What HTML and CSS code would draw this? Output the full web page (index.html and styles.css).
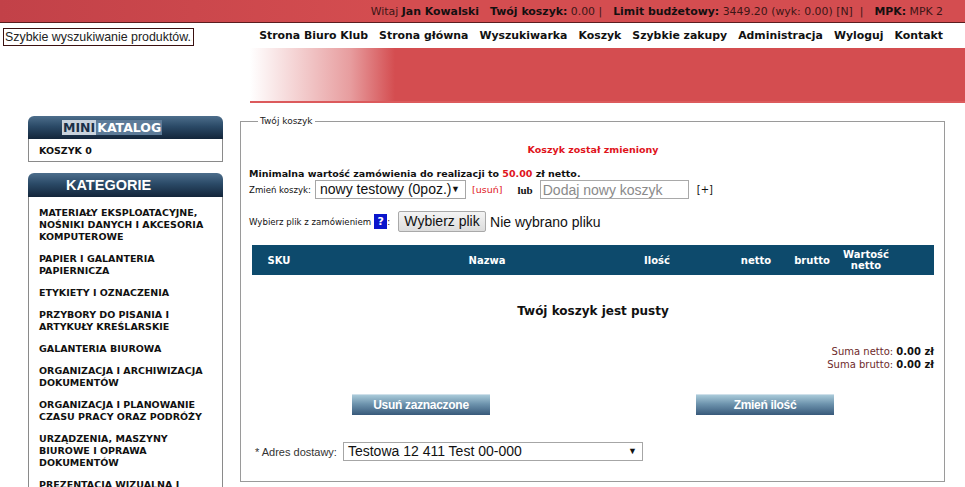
FILE: index.html
```html
<!DOCTYPE html>
<html lang="pl">
<head>
    <meta charset="UTF-8">
    <title>Twój koszyk</title>
    <link rel="stylesheet" href="styles.css">
</head>
<body>
    <div class="topbar">
        <span>Witaj <b>Jan Kowalski</b></span>
        <span><b>Twój koszyk:</b> 0.00 |</span>
        <span><b>Limit budżetowy:</b> 3449.20 (wyk: 0.00) [N] &nbsp;|</span>
        <span><b>MPK:</b> MPK 2</span>
    </div>

    <div class="navrow">
        <input class="quick-search" type="text" value="Szybkie wyszukiwanie produktów...">
        <nav class="menu">
            <a href="#">Strona Biuro Klub</a>
            <a href="#">Strona główna</a>
            <a href="#">Wyszukiwarka</a>
            <a href="#">Koszyk</a>
            <a href="#">Szybkie zakupy</a>
            <a href="#">Administracja</a>
            <a href="#">Wyloguj</a>
            <a href="#">Kontakt</a>
        </nav>
    </div>

    <div class="banner"></div>

    <div class="page">
        <aside class="sidebar">
            <div class="side-head mini"><span class="mini-a">MINI</span><span class="mini-b">KATALOG</span></div>
            <div class="side-box">KOSZYK 0</div>

            <div class="side-head cat">KATEGORIE</div>
            <ul class="cat-list">
                <li>MATERIAŁY EKSPLOATACYJNE, NOŚNIKI DANYCH I AKCESORIA KOMPUTEROWE</li>
                <li>PAPIER I GALANTERIA PAPIERNICZA</li>
                <li>ETYKIETY I OZNACZENIA</li>
                <li>PRZYBORY DO PISANIA I ARTYKUŁY KREŚLARSKIE</li>
                <li>GALANTERIA BIUROWA</li>
                <li>ORGANIZACJA I ARCHIWIZACJA DOKUMENTÓW</li>
                <li>ORGANIZACJA I PLANOWANIE CZASU PRACY ORAZ PODRÓŻY</li>
                <li>URZĄDZENIA, MASZYNY BIUROWE I OPRAWA DOKUMENTÓW</li>
                <li>PREZENTACJA WIZUALNA I TABLICE</li>
            </ul>
        </aside>

        <fieldset class="cart">
            <legend>Twój koszyk</legend>

            <p class="notice">Koszyk został zmieniony</p>

            <p class="min-value">Minimalna wartość zamówienia do realizacji to <span class="red">50.00</span> zł netto.</p>
            <div class="row change-row">
                <span class="small">Zmień koszyk:</span>
                <div class="select sel-cart">nowy testowy (0poz.)<span class="arrow">▼</span></div>
                <a class="remove" href="#">[usuń]</a>
                <b class="lub">lub</b>
                <input class="new-cart" type="text" placeholder="Dodaj nowy koszyk">
                <span class="plus">[+]</span>
            </div>

            <div class="row file-row">
                <span class="small">Wybierz plik z zamówieniem</span>
                <span class="help">?</span><span class="small">:</span>
                <span class="file-btn">Wybierz plik</span>
                <span class="file-none">Nie wybrano pliku</span>
            </div>

            <div class="cart-head">
                <span>SKU</span>
                <span class="c-name">Nazwa</span>
                <span>Ilość</span>
                <span></span>
                <span>netto</span>
                <span>brutto</span>
                <span>Wartość netto</span>
            </div>

            <p class="empty">Twój koszyk jest pusty</p>

            <div class="sums">
                <div>Suma netto: <b>0.00 zł</b></div>
                <div>Suma brutto: <b>0.00 zł</b></div>
            </div>

            <div class="actions">
                <button class="blue-btn">Usuń zaznaczone</button>
                <button class="blue-btn">Zmień ilość</button>
            </div>

            <div class="row address-row">
                <span class="addr-label">* Adres dostawy:</span>
                <div class="select sel-address">Testowa 12 411 Test 00-000<span class="arrow">▼</span></div>
            </div>
        </fieldset>
    </div>
</body>
</html>
```

FILE: styles.css
```css
:root {
    --red: #d44d50;
    --navy: #0d4a6c;
    --text: #111;
}

* {
    box-sizing: border-box;
    margin: 0;
    padding: 0;
}

body {
    font-family: 'DejaVu Sans', Verdana, sans-serif;
    color: var(--text);
    background: #fff;
    overflow: hidden;
}

/* pasek gorny */
.topbar {
    height: 23px;
    background: linear-gradient(to right, #c24148, #d44d50 40%);
    border-bottom: 1px solid #5a1d1f;
    display: flex;
    justify-content: flex-end;
    align-items: center;
    gap: 11px;
    padding-right: 22px;
    font-size: 10.9px;
    color: #3d1616;
    white-space: nowrap;
}

.topbar b {
    color: #141010;
}

.navrow {
    height: 25px;
    display: flex;
    align-items: center;
    justify-content: space-between;
    padding: 0 22px 0 3px;
}

.quick-search {
    flex-shrink: 0;
    width: 191px;
    height: 18px;
    border: 1px solid #3a1010;
    font-family: 'Liberation Sans', Arial, sans-serif;
    font-size: 12.4px;
    padding: 0 1px;
    color: #222;
    margin-top: 2px;
}

.menu {
    display: flex;
    gap: 11px;
    white-space: nowrap;
}

.menu a {
    color: #111;
    text-decoration: none;
    font-weight: bold;
    font-size: 10.9px;
}

.banner {
    height: 55px;
    margin-left: 250px;
    background: linear-gradient(to right, rgba(212, 77, 80, 0) 0, rgba(212, 77, 80, 0.55) 100px, var(--red) 145px);
    border-bottom: 2px solid #dc5a5c;
}

/* uklad */
.page {
    display: flex;
    align-items: flex-start;
    padding: 13px 0 0 28px;
    gap: 17px;
}

.sidebar {
    width: 195px;
    flex-shrink: 0;
}

.side-head {
    height: 24px;
    border-radius: 6px 6px 0 0;
    background: linear-gradient(#4d6e8c, #2b4a67 45%, #13253a);
    display: flex;
    align-items: center;
}

.side-head.mini {
    height: 23px;
    padding-left: 34px;
    font-weight: bold;
    font-size: 12.5px;
}

.mini-a {
    background: #c9d3dd;
    color: #1b3048;
    padding: 0 1px;
}

.mini-b {
    background: #5d7b98;
    color: #fff;
    padding: 0 1px;
}

.side-box {
    border: 1px solid #8a8a8a;
    border-top: none;
    height: 23px;
    font-size: 9.5px;
    font-weight: bold;
    padding: 6px 0 0 10px;
    margin-bottom: 11px;
}

.side-head.cat {
    padding-left: 38px;
    font-family: 'Liberation Sans', Arial, sans-serif;
    font-weight: bold;
    font-size: 14.5px;
    color: #fff;
}

.cat-list {
    list-style: none;
    border: 1px solid #8a8a8a;
    border-top: none;
    padding: 10px 8px 0 10px;
}

.cat-list li {
    font-size: 9.5px;
    font-weight: bold;
    line-height: 12px;
    margin-bottom: 10px;
}

/* koszyk */
.cart {
    width: 705px;
    height: 366px;
    border: 1px solid #9a9a9a;
    padding: 10px 10px 0 11px;
}

.cart legend {
    font-size: 9px;
    margin-left: 6px;
    padding: 0 2px;
    color: #222;
}

.notice {
    text-align: center;
    color: #e0141c;
    font-size: 9.5px;
    font-weight: bold;
    margin-top: 8px;
    height: 24px;
}

.min-value {
    font-size: 9.5px;
    font-weight: bold;
    margin-left: -3px;
}

.red {
    color: #e0141c;
}

.row {
    display: flex;
    align-items: center;
}

.small {
    font-size: 8.6px;
}

.change-row {
    margin-left: -3px;
    margin-top: 1px;
    gap: 4px;
}

.select {
    position: relative;
    height: 19px;
    border: 1px solid #a6a6a6;
    font-family: 'Liberation Sans', Arial, sans-serif;
    font-size: 14px;
    line-height: 17px;
    padding-left: 4px;
    background: #fff;
}

.select .arrow {
    position: absolute;
    right: 5px;
    top: 0;
    font-size: 9px;
}

.sel-cart {
    width: 151px;
}

.remove {
    color: #e0141c;
    font-size: 9.5px;
    text-decoration: none;
    margin: 0 11px 0 2px;
}

.lub {
    font-family: 'Liberation Serif', serif;
    font-size: 11px;
    margin-right: 3px;
}

.new-cart {
    width: 149px;
    height: 19px;
    border: 1px solid #a9a9a9;
    font-family: 'Liberation Sans', Arial, sans-serif;
    font-size: 14px;
    padding-left: 2px;
}

.new-cart::placeholder {
    color: #8a8a8a;
}

.plus {
    font-size: 10px;
    margin-left: 4px;
}

.file-row {
    margin: 12px 0 0 -3px;
    gap: 0;
}

.help {
    display: inline-block;
    width: 13px;
    height: 15px;
    background: #0a16cc;
    color: #fff;
    font-weight: bold;
    font-size: 11px;
    text-align: center;
    line-height: 15px;
    margin-left: 3px;
}

.file-btn {
    margin-left: 8px;
    height: 21px;
    width: 88px;
    border: 1px solid #a9a9a9;
    border-radius: 2px;
    background: linear-gradient(#f4f4f4, #dcdcdc);
    font-family: 'Liberation Sans', Arial, sans-serif;
    font-size: 14px;
    text-align: center;
    line-height: 19px;
}

.file-none {
    font-family: 'Liberation Sans', Arial, sans-serif;
    font-size: 14px;
    margin-left: 4px;
}

.cart-head {
    margin-top: 13px;
    height: 30px;
    background: var(--navy);
    display: grid;
    grid-template-columns: 54px 312px 78px 32px 56px 56px 52px 1fr;
    align-items: center;
    color: #fff;
    font-size: 10px;
    font-weight: bold;
    text-align: center;
    line-height: 11px;
}

.cart-head .c-name {
    padding-left: 50px;
}

.empty {
    text-align: center;
    font-weight: bold;
    font-size: 12px;
    margin-top: 29px;
    height: 41px;
}

.sums {
    text-align: right;
    font-size: 10px;
    color: #6e2a2a;
    line-height: 13px;
}

.sums b {
    color: #111;
}

.actions {
    display: flex;
    justify-content: center;
    gap: 206px;
    margin-top: 23px;
}

.blue-btn {
    width: 138px;
    height: 21px;
    border: none;
    border-top: 1px solid #cfe0ea;
    background: linear-gradient(#a9cad9, #6d93ad 45%, #38597a);
    color: #fff;
    font-family: 'Liberation Sans', Arial, sans-serif;
    font-weight: bold;
    font-size: 12px;
    letter-spacing: -0.3px;
}

.address-row {
    margin-top: 27px;
    gap: 6px;
    padding-left: 3px;
}

.addr-label {
    font-family: 'Liberation Sans', Arial, sans-serif;
    font-size: 11px;
    color: #333;
}

.sel-address {
    width: 300px;
}
```
